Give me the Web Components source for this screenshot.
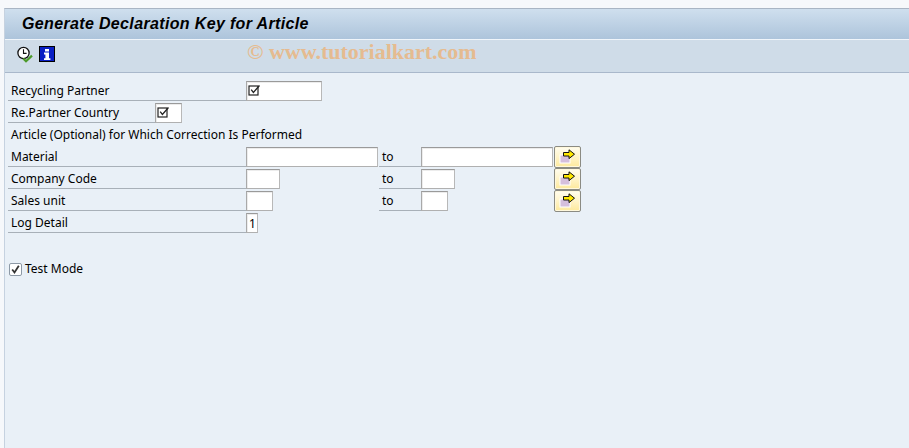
<!DOCTYPE html>
<html>
<head>
<meta charset="utf-8">
<title>Generate Declaration Key for Article</title>
<style>
  html, body { margin: 0; height: 100%; background: #f6f8fb; }
  body { overflow: hidden; }
</style>
</head>
<body>
<sap-window>
  <sap-title slot="title">Generate Declaration Key for Article</sap-title>
  <sap-toolbar slot="toolbar">
    <sap-icon name="execute"></sap-icon>
    <sap-icon name="info"></sap-icon>
    <span slot="mark">© www.tutorialkart.com</span>
  </sap-toolbar>

  <sap-row label="Recycling Partner" label-width="238"><sap-field width="76" checked></sap-field></sap-row>
  <sap-row label="Re.Partner Country" label-width="147"><sap-field width="27" checked></sap-field></sap-row>
  <sap-row label="Article (Optional) for Which Correction Is Performed" label-width="400" plain></sap-row>
  <sap-row label="Material" label-width="238">
    <sap-field width="132"></sap-field><sap-to></sap-to><sap-field width="132"></sap-field><sap-more></sap-more>
  </sap-row>
  <sap-row label="Company Code" label-width="238">
    <sap-field width="34"></sap-field><sap-to gap="99"></sap-to><sap-field width="34"></sap-field><sap-more gap="99"></sap-more>
  </sap-row>
  <sap-row label="Sales unit" label-width="238">
    <sap-field width="27"></sap-field><sap-to gap="106"></sap-to><sap-field width="27"></sap-field><sap-more gap="106"></sap-more>
  </sap-row>
  <sap-row label="Log Detail" label-width="238"><sap-field width="12" value="1"></sap-field></sap-row>
  <sap-check>Test Mode</sap-check>
</sap-window>

<script>
const FONT = '"Noto Sans", "DejaVu Sans", sans-serif';

class SapWindow extends HTMLElement {
  constructor() {
    super();
    this.attachShadow({ mode: 'open' });
    this.shadowRoot.innerHTML = `
      <style>
        :host { display: block; height: 448px; box-sizing: border-box; padding: 8px 0 0 4px; }
        .frame { height: 440px; box-sizing: border-box; display: flex; flex-direction: column;
                 background: #e9f0f7; border-left: 1px solid #c6d2e0; border-top: 1px solid #a9b5c4; }
        .form { padding: 8px 0 0 3px; display: flex; flex-direction: column; }
      </style>
      <div class="frame">
        <slot name="title"></slot>
        <slot name="toolbar"></slot>
        <div class="form"><slot></slot></div>
      </div>`;
  }
}
customElements.define('sap-window', SapWindow);

class SapTitle extends HTMLElement {
  constructor() {
    super();
    this.attachShadow({ mode: 'open' });
    this.shadowRoot.innerHTML = `
      <style>
        :host { display: flex; align-items: center; height: 30px; padding-left: 17px; flex: none;
                background: linear-gradient(#cfdfee, #adc4db);
                border-bottom: 1px solid #f0f5fa;
                font: italic bold 16px "Liberation Sans", sans-serif; color: #000; letter-spacing: .35px; }
      </style>
      <slot></slot>`;
  }
}
customElements.define('sap-title', SapTitle);

class SapToolbar extends HTMLElement {
  constructor() {
    super();
    this.attachShadow({ mode: 'open' });
    this.shadowRoot.innerHTML = `
      <style>
        :host { display: flex; align-items: flex-start; height: 32px; flex: none; padding: 5px 0 0 11px; box-sizing: border-box;
                background: #cfdce8; border-bottom: 1px solid #a9b8cb; box-sizing: content-box; height: 27px; }
        .icons { display: flex; gap: 5px; margin-top: 1px; }
        .mark { position: absolute; left: 247px; top: 39px;
                font: bold 22px "Liberation Serif", serif; color: #e5bb90; white-space: nowrap; }
      </style>
      <div class="icons"><slot></slot></div>
      <div class="mark"><slot name="mark"></slot></div>`;
  }
}
customElements.define('sap-toolbar', SapToolbar);

const ICONS = {
  execute: `<svg width="18" height="18" viewBox="0 0 18 18">
    <circle cx="7.5" cy="7" r="5.6" fill="#fff" stroke="#111" stroke-width="1.3"/>
    <path d="M7.5 3.2V7.4H10.6" fill="none" stroke="#111" stroke-width="1.1"/>
    <path d="M7.2 12.5L10 15.2L16 9.6" fill="none" stroke="#4c9a2a" stroke-width="2.2"/>
  </svg>`,
  info: `<svg width="16" height="16" viewBox="0 0 16 16">
    <rect x=".5" y=".5" width="15" height="15" fill="#0a1fc4" stroke="#000"/>
    <path d="M6 3h4v2.4H6zM5 6.6h5v5.6h1.4V14H5v-1.8h1.4V8.4H5z" fill="#fff"/>
  </svg>`
};

class SapIcon extends HTMLElement {
  constructor() {
    super();
    this.attachShadow({ mode: 'open' });
  }
  connectedCallback() {
    this.shadowRoot.innerHTML = `
      <style>:host { display: block; height: 18px; } svg { display: block; }</style>
      ${ICONS[this.getAttribute('name')]}`;
  }
}
customElements.define('sap-icon', SapIcon);

class SapRow extends HTMLElement {
  constructor() {
    super();
    this.attachShadow({ mode: 'open' });
  }
  connectedCallback() {
    const w = this.getAttribute('label-width');
    const plain = this.hasAttribute('plain');
    this.shadowRoot.innerHTML = `
      <style>
        :host { display: flex; height: 22px; align-items: flex-start; flex: none; }
        .label { width: ${w}px; height: 20px; box-sizing: border-box; padding: 1px 0 0 3px; flex: none;
                 font: 12px/18px ${FONT}; color: #000; white-space: nowrap;
                 border-bottom: ${plain ? '0' : '1px solid #a8b0b8'}; }
      </style>
      <div class="label">${this.getAttribute('label')}</div>
      <slot></slot>`;
  }
}
customElements.define('sap-row', SapRow);

class SapField extends HTMLElement {
  constructor() {
    super();
    this.attachShadow({ mode: 'open' });
  }
  connectedCallback() {
    const check = this.hasAttribute('checked')
      ? `<svg width="13" height="12" viewBox="0 0 13 12"><rect x="1" y="2" width="9" height="9" fill="none" stroke="#222" stroke-width="1.2"/><path d="M3.2 5.6L5.4 8.4L11.5 1.5" fill="none" stroke="#222" stroke-width="1.3"/></svg>`
      : '';
    this.shadowRoot.innerHTML = `
      <style>
        :host { display: block; width: ${this.getAttribute('width')}px; height: 20px; box-sizing: border-box; flex: none;
                background: #fff; border: 1px solid #a9a9a9; border-top-color: #9a9a9a; border-right-color: #b8b8b8; border-bottom-color: #b0b0b0;
                box-shadow: inset 1px 1px 0 #ececec; }
        .v { display: block; padding: 3px 0 0 2px; font: 12px/14px ${FONT}; color: #000; }
        svg { display: block; margin: 2px 0 0 1px; }
      </style>
      ${check}${this.hasAttribute('value') ? `<span class="v">${this.getAttribute('value')}</span>` : ''}`;
  }
}
customElements.define('sap-field', SapField);

class SapTo extends HTMLElement {
  constructor() {
    super();
    this.attachShadow({ mode: 'open' });
  }
  connectedCallback() {
    this.shadowRoot.innerHTML = `
      <style>
        :host { display: block; width: 42px; height: 20px; box-sizing: border-box; flex: none;
                margin-left: ${(+this.getAttribute('gap') || 1)}px; padding: 1px 0 0 3px;
                font: 12px/18px ${FONT}; color: #000; border-bottom: 1px solid #a8b0b8; }
      </style>to`;
  }
}
customElements.define('sap-to', SapTo);

class SapMore extends HTMLElement {
  constructor() {
    super();
    this.attachShadow({ mode: 'open' });
  }
  connectedCallback() {
    this.shadowRoot.innerHTML = `
      <style>
        :host { display: block; flex: none; width: 27px; height: 22px; box-sizing: border-box; margin-top: -1px;
                margin-left: ${(+this.getAttribute('gap') || 1)}px; border: 1px solid #8b8b83; border-radius: 2px;
                background: linear-gradient(#fffdf0, #fff3c4 55%, #fde99c); box-shadow: inset 0 0 0 1px #fff8dc; }
        svg { display: block; margin: 2px 0 0 4px; }
      </style>
      <svg width="18" height="16" viewBox="0 0 18 16">
        <rect x="1" y="6" width="10" height="8" fill="#d5bfdd" stroke="#fff"/>
        <path d="M4.5 3.5H10V.8L15.5 5.2L10 9.6V7H4.5z" fill="#ffe800" stroke="#111"/>
      </svg>`;
  }
}
customElements.define('sap-more', SapMore);

class SapCheck extends HTMLElement {
  constructor() {
    super();
    this.attachShadow({ mode: 'open' });
    this.shadowRoot.innerHTML = `
      <style>
        :host { display: flex; align-items: center; gap: 3px; margin: 24px 0 0 1px; height: 20px;
                font: 12px/18px ${FONT}; color: #000; }
        .box { width: 13px; height: 13px; box-sizing: border-box; background: #fff; border: 1px solid #8d99a6; border-radius: 2px; }
        svg { display: block; }
      </style>
      <div class="box"><svg width="11" height="11" viewBox="0 0 11 11"><path d="M2.2 5.5L4.5 8.5L8.8 1.8" fill="none" stroke="#333" stroke-width="1.8"/></svg></div>
      <slot></slot>`;
  }
}
customElements.define('sap-check', SapCheck);
</script>
</body>
</html>
